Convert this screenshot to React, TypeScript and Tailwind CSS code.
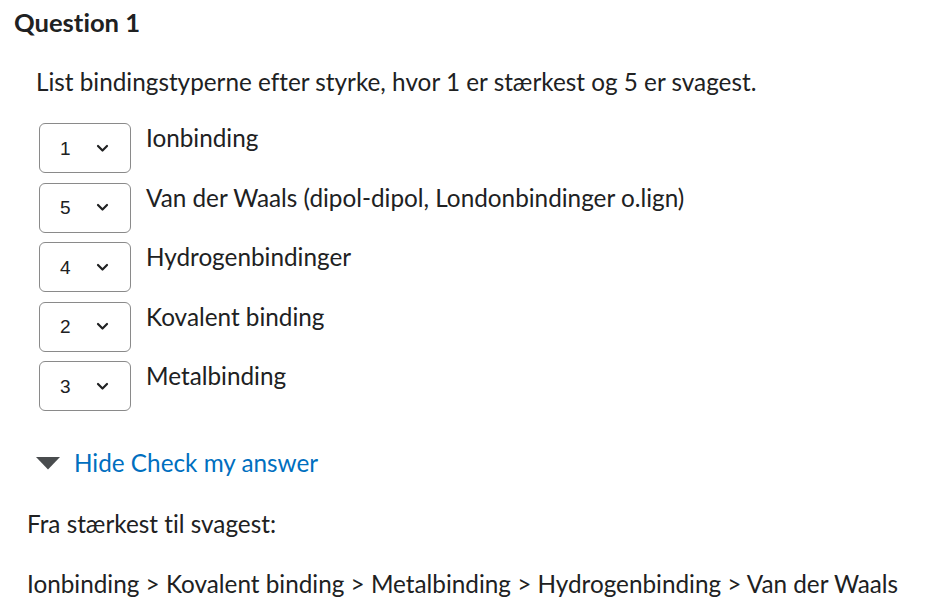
import { FC } from 'react';

const rows = [
  { value: '1', label: 'Ionbinding' },
  { value: '5', label: 'Van der Waals (dipol-dipol, Londonbindinger o.lign)' },
  { value: '4', label: 'Hydrogenbindinger' },
  { value: '2', label: 'Kovalent binding' },
  { value: '3', label: 'Metalbinding' },
];

const Chevron: FC = () => (
  <svg width="13" height="9" viewBox="0 0 13 9" fill="none">
    <path d="M2 2 L6.5 6.5 L11 2" stroke="#202122" strokeWidth="2.2" strokeLinecap="round" strokeLinejoin="round" />
  </svg>
);

const App: FC = () => {
  return (
    <div className="w-[925px] h-[600px] bg-white text-[#202122] font-['Lato','Noto_Sans',sans-serif] [font-variant-ligatures:none] overflow-hidden">
      <h2 className="pl-[14px] pt-[7px] text-[25.6px] leading-[30px] font-bold">Question 1</h2>

      <div className="pl-[36px] pt-[30px] text-[24.3px] leading-[30px]">
        List bindingstyperne efter styrke, hvor 1 er stærkest og 5 er svagest.
      </div>

      <div className="pl-[39px] pt-[26px] flex flex-col gap-[9.5px]">
        {rows.map((row) => (
          <div key={row.value} className="flex items-start">
            <div className="w-[92px] h-[50px] border border-[#8a8a8a] rounded-[6px] flex items-center justify-between pl-[20px] pr-[21px] font-['Liberation_Sans',sans-serif] text-[19px]">
              <span className="pt-[2px]">{row.value}</span>
              <Chevron />
            </div>
            <div className="pl-[15px] pt-[0px] text-[24.3px] leading-[30px]">{row.label}</div>
          </div>
        ))}
      </div>

      <div className="pl-[36px] pt-[37px] flex items-center gap-[14px]">
        <svg width="24" height="13" viewBox="0 0 24 13">
          <path d="M0 0 H24 L12 12.5 Z" fill="#494c4e" />
        </svg>
        <span className="text-[24.3px] leading-[30px] text-[#006fbf]">Hide Check my answer</span>
      </div>

      <div className="pl-[27px] pt-[31px] text-[24.3px] leading-[30px]">Fra stærkest til svagest:</div>
      <div className="pl-[27px] pt-[30px] text-[24.3px] leading-[30px]">
        Ionbinding &gt; Kovalent binding &gt; Metalbinding &gt; Hydrogenbinding &gt; Van der Waals
      </div>
    </div>
  );
};

export default App;
